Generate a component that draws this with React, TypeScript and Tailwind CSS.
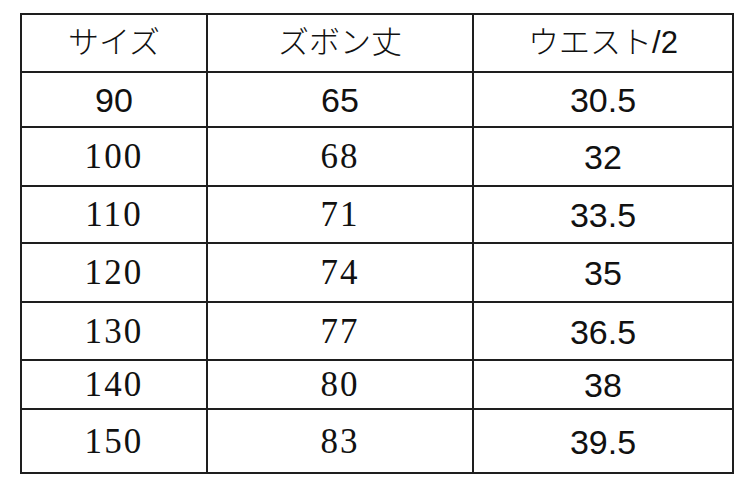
import React from 'react';

type Cell = { text: string; serif?: boolean };

const headers = ['サイズ', 'ズボン丈', 'ウエスト/2'];

// size, trouser length, waist/2 — the first data row is set in a sans face in the source
const rows: { cells: Cell[]; h: string }[] = [
  { h: 'h-[53px]', cells: [{ text: '90' }, { text: '65' }, { text: '30.5' }] },
  { h: 'h-[57px]', cells: [{ text: '100', serif: true }, { text: '68', serif: true }, { text: '32' }] },
  { h: 'h-[55px]', cells: [{ text: '110', serif: true }, { text: '71', serif: true }, { text: '33.5' }] },
  { h: 'h-[57px]', cells: [{ text: '120', serif: true }, { text: '74', serif: true }, { text: '35' }] },
  { h: 'h-[56px]', cells: [{ text: '130', serif: true }, { text: '77', serif: true }, { text: '36.5' }] },
  { h: 'h-[47px]', cells: [{ text: '140', serif: true }, { text: '80', serif: true }, { text: '38' }] },
  { h: 'h-[62px]', cells: [{ text: '150', serif: true }, { text: '83', serif: true }, { text: '39.5' }] },
];

const SizeTable = () => {
  return (
    <div className="ml-[20px] mt-[13px] grid w-[714px] grid-cols-[184px_264px_258px] gap-[2px] bg-[#1e1e1e] p-[2px]">
      {headers.map(h => (
        <div
          key={h}
          className="flex h-[56px] items-center justify-center bg-white pt-[1px] text-[31px] font-light text-[#111] [font-family:'Liberation_Sans','Noto_Sans_CJK_JP',sans-serif]"
        >
          {h}
        </div>
      ))}
      {rows.map((row, i) =>
        row.cells.map((cell, j) => (
          <div
            key={`${i}-${j}`}
            className={`flex ${row.h} items-center justify-center bg-white pt-[2px] text-[#111] ${
              cell.serif
                ? "text-[35px] tracking-[0.06em] [font-family:'Liberation_Serif',serif]"
                : "text-[34px] [font-family:'Liberation_Sans',sans-serif]"
            }`}
          >
            {cell.text}
          </div>
        ))
      )}
    </div>
  );
};

export default function App() {
  return (
    <div className="h-[489px] w-[750px] overflow-hidden bg-white">
      <SizeTable />
    </div>
  );
}
